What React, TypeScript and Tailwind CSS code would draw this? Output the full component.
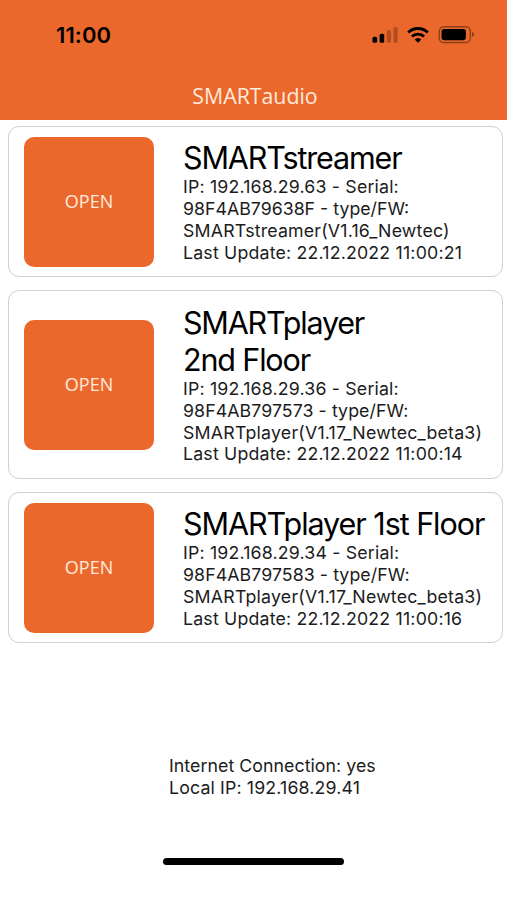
type Line = { text: string; tracking: string };
type Device = { id: number; height: string; title: Line[]; details: Line[] };

const devices: Device[] = [
  {
    id: 1,
    height: 'h-[151px]',
    title: [{ text: 'SMARTstreamer', tracking: 'tracking-[-1.15px]' }],
    details: [
      { text: 'IP: 192.168.29.63 - Serial:', tracking: 'tracking-[0.17px]' },
      { text: '98F4AB79638F - type/FW:', tracking: 'tracking-[0px]' },
      { text: 'SMARTstreamer(V1.16_Newtec)', tracking: 'tracking-[0.18px]' },
      { text: 'Last Update: 22.12.2022 11:00:21', tracking: 'tracking-[0.18px]' },
    ],
  },
  {
    id: 2,
    height: 'h-[189px]',
    title: [
      { text: 'SMARTplayer', tracking: 'tracking-[-1.2px]' },
      { text: '2nd Floor', tracking: 'tracking-[-1.15px]' },
    ],
    details: [
      { text: 'IP: 192.168.29.36 - Serial:', tracking: 'tracking-[0.17px]' },
      { text: '98F4AB797573 - type/FW:', tracking: 'tracking-[0.07px]' },
      { text: 'SMARTplayer(V1.17_Newtec_beta3)', tracking: 'tracking-[0.2px]' },
      { text: 'Last Update: 22.12.2022 11:00:14', tracking: 'tracking-[0.18px]' },
    ],
  },
  {
    id: 3,
    height: 'h-[151px]',
    title: [{ text: 'SMARTplayer 1st Floor', tracking: 'tracking-[-1.05px]' }],
    details: [
      { text: 'IP: 192.168.29.34 - Serial:', tracking: 'tracking-[0.17px]' },
      { text: '98F4AB797583 - type/FW:', tracking: 'tracking-[0.07px]' },
      { text: 'SMARTplayer(V1.17_Newtec_beta3)', tracking: 'tracking-[0.2px]' },
      { text: 'Last Update: 22.12.2022 11:00:16', tracking: 'tracking-[0.18px]' },
    ],
  },
];

function StatusIcons() {
  return (
    <svg width="104" height="20" viewBox="0 0 104 20" aria-hidden="true">
      <rect x="1.5" y="11.7" width="4.6" height="6" rx="1.5" />
      <rect x="8.6" y="8.8" width="4.6" height="8.9" rx="1.5" />
      <rect x="15.8" y="5" width="4.2" height="12.7" rx="1.5" fillOpacity="0.25" />
      <rect x="22.5" y="2" width="4.2" height="15.7" rx="1.5" fillOpacity="0.25" />
      <g fill="none" stroke="#000" strokeWidth="2.8">
        <path d="M37.2 7.4a14.3 14.3 0 0 1 19.6 0" />
        <path d="M40.9 11.5a8.8 8.8 0 0 1 12.2 0" />
      </g>
      <path d="M47 17.8l-3.3-3.4a4.9 4.9 0 0 1 6.6 0z" />
      <rect x="68.3" y="1.7" width="31" height="15.8" rx="4.6" fill="none" stroke="#000" strokeOpacity="0.4" strokeWidth="1.4" />
      <rect x="70.5" y="4" width="24.4" height="11.2" rx="2.4" />
      <path d="M101 7v5c1.4-.4 2.1-1.4 2.1-2.5s-.7-2.1-2.1-2.5z" fillOpacity="0.4" />
    </svg>
  );
}

function DeviceCard({ device }: { device: Device }) {
  return (
    <article className={`flex items-center gap-[29px] rounded-[11px] border-[1.5px] border-[#d0d0d0] pl-[15px] ${device.height}`}>
      <button className="h-[130px] w-[130px] shrink-0 rounded-[10px] bg-[#eb682d] font-['Open_Sans','Noto_Sans',sans-serif] text-[18px] text-[#ffeadd]">
        OPEN
      </button>
      <div className="whitespace-nowrap">
        <h2 className="text-[30.5px] leading-[37px] text-black">
          {device.title.map((line) => (
            <span key={line.text} className={`block ${line.tracking}`}>{line.text}</span>
          ))}
        </h2>
        <p className="text-[17.75px] leading-[21.8px] text-[#1c1c1c]">
          {device.details.map((line) => (
            <span key={line.text} className={`block ${line.tracking}`}>{line.text}</span>
          ))}
        </p>
      </div>
    </article>
  );
}

export default function App() {
  return (
    <div className="flex h-[900px] w-[507px] flex-col overflow-hidden bg-white font-['Inter','Liberation_Sans',sans-serif]">
      <header className="flex h-[120px] shrink-0 flex-col bg-[#eb682d]">
        <div className="flex h-[70px] items-center justify-between pl-[56px] pr-[32px]">
          <span className="text-[22px] font-semibold tracking-[0.1px] text-black">11:00</span>
          <StatusIcons />
        </div>
        <h1 className="pt-[10px] pl-[3px] text-center font-['Open_Sans','Noto_Sans',sans-serif] text-[21.3px] leading-[32px] text-[#ffeadd]">
          SMARTaudio
        </h1>
      </header>
      <main className="flex flex-col gap-[13px] pt-[6px] pl-[8px] pr-[4px]">
        {devices.map((device) => (
          <DeviceCard key={device.id} device={device} />
        ))}
      </main>
      <footer className="flex grow flex-col pt-[112px]">
        <p className="pl-[169px] text-[17.75px] leading-[22px] text-[#1c1c1c]">
          <span className="block tracking-[0.05px]">Internet Connection: yes</span>
          <span className="block tracking-[0.14px]">Local IP: 192.168.29.41</span>
        </p>
        <div className="mt-[59px] ml-[163px] h-[7px] w-[181px] rounded-full bg-black" />
      </footer>
    </div>
  );
}
